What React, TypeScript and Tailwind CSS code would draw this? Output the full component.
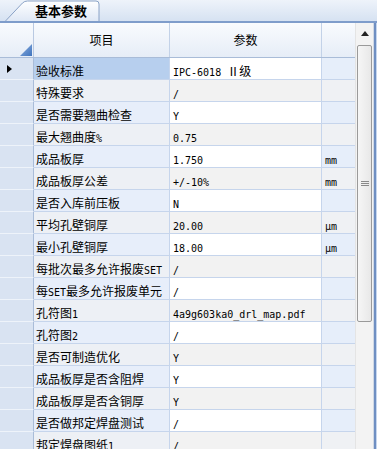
import React from "react";

const rows: [string, string, string][] = [
  ["验收标准", "IPC-6018 Ⅱ级", ""],
  ["特殊要求", "/", ""],
  ["是否需要翘曲检查", "Y", ""],
  ["最大翘曲度%", "0.75", ""],
  ["成品板厚", "1.750", "mm"],
  ["成品板厚公差", "+/-10%", "mm"],
  ["是否入库前压板", "N", ""],
  ["平均孔壁铜厚", "20.00", "μm"],
  ["最小孔壁铜厚", "18.00", "μm"],
  ["每批次最多允许报废SET", "/", ""],
  ["每SET最多允许报废单元", "/", ""],
  ["孔符图1", "4a9g603ka0_drl_map.pdf", ""],
  ["孔符图2", "/", ""],
  ["是否可制造优化", "Y", ""],
  ["成品板厚是否含阻焊", "Y", ""],
  ["成品板厚是否含铜厚", "Y", ""],
  ["是否做邦定焊盘测试", "/", ""],
  ["邦定焊盘图纸1", "/", ""],
];

const CJK = /([\u2150-\u218f\u3000-\u9fff\uff00-\uffef]+)/;

function Mixed({ text }: { text: string }) {
  const parts = text.split(CJK).filter((p) => p.length > 0);
  return (
    <span className="whitespace-pre leading-[22px] text-[#000]">
      {parts.map((p, i) =>
        CJK.test(p) ? (
          <span key={i} className="font-['Noto_Sans_CJK_SC',sans-serif] text-[12px]">
            {p}
          </span>
        ) : (
          <span key={i} className="font-['DejaVu_Sans_Mono',monospace] text-[10px]">
            {p}
          </span>
        )
      )}
    </span>
  );
}

export default function App() {
  return (
    <div className="w-[377px] h-[449px] overflow-hidden bg-white flex flex-col select-none">
      {/* tab strip */}
      <div className="h-[23px] shrink-0 flex items-end bg-gradient-to-b from-[#eef3fa] to-[#d6e2f2] border-b-2 border-[#7f9dcb]">
        <div className="relative ml-[5px] w-[95px] h-[21px] flex items-center">
          <svg className="absolute inset-0" width="95" height="21" viewBox="0 0 95 21">
            <defs>
              <linearGradient id="tabg" x1="0" y1="0" x2="0" y2="1">
                <stop offset="0" stopColor="#ffffff" />
                <stop offset="1" stopColor="#dfe8f5" />
              </linearGradient>
            </defs>
            <path d="M0.5,21 L17.5,3 Q19.5,1 22.5,1 L91,1 Q94,1 94,4 L94,21" fill="url(#tabg)" stroke="#8aa2c6" strokeWidth="1" />
          </svg>
          <span className="relative pl-[30px] text-[13px] font-bold leading-none text-black font-['Noto_Sans_CJK_SC',sans-serif]">
            基本参数
          </span>
        </div>
      </div>

      <div className="flex flex-1 min-h-0">
        {/* grid */}
        <div className="w-[355px] shrink-0 flex flex-col">
          {/* header */}
          <div className="flex h-[35px] shrink-0 bg-gradient-to-b from-[#f9fbfe] to-[#e6edf7] border-b border-[#a9bcd8]">
            <div className="relative w-[34px] border-r border-[#b9c9e2]">
              <svg className="absolute right-[1px] bottom-[1px]" width="12" height="12" viewBox="0 0 12 12">
                <defs>
                  <linearGradient id="cg" x1="0" y1="0" x2="1" y2="1">
                    <stop offset="0" stopColor="#8fb2e0" />
                    <stop offset="1" stopColor="#3f73bd" />
                  </linearGradient>
                </defs>
                <path d="M12,0 L12,12 L0,12 Z" fill="url(#cg)" />
              </svg>
            </div>
            <div className="w-[136px] border-r border-[#c3d2e8] flex items-center justify-center text-[12px] text-black font-['Noto_Sans_CJK_SC',sans-serif]">
              项目
            </div>
            <div className="w-[152px] border-r border-[#c3d2e8] flex items-center justify-center text-[12px] text-black font-['Noto_Sans_CJK_SC',sans-serif]">
              参数
            </div>
            <div className="flex-1" />
          </div>

          {/* rows */}
          {rows.map(([item, val, unit], i) => {
            const odd = i % 2 === 1;
            const itemBg = i === 0 ? "bg-[#b7cfee]" : odd ? "bg-[#edf0f5]" : "bg-[#e7eefa]";
            const valBg = odd ? "bg-[#f2f2f2]" : "bg-white";
            const unitBg = odd ? "bg-[#eff1f4]" : "bg-[#e6eefa]";
            return (
              <div key={i} className="flex h-[22px] shrink-0">
                <div className="w-[34px] h-full bg-[#d9e3f2] border-r border-b border-r-[#a9bcd8] border-b-[#eef3fa] flex items-center pl-[7px]">
                  {i === 0 && (
                    <svg width="5" height="8" viewBox="0 0 5 8">
                      <path d="M0,0 L5,4 L0,8 Z" fill="#000" />
                    </svg>
                  )}
                </div>
                <div className={`w-[136px] h-full ${itemBg} border-r border-b border-[#c6d5ec] pl-[2px] overflow-hidden`}>
                  <Mixed text={item} />
                </div>
                <div className={`w-[152px] h-full ${valBg} border-r border-b border-[#c6d5ec] pl-[3px] overflow-hidden`}>
                  <Mixed text={val} />
                </div>
                <div className={`flex-1 h-full ${unitBg} border-b border-[#c6d5ec] pl-[3px] overflow-hidden`}>
                  {unit && <Mixed text={unit} />}
                </div>
              </div>
            );
          })}
        </div>

        {/* scrollbar */}
        <div className="w-[18px] shrink-0 bg-[#f3f3f3] flex flex-col items-center border-l border-[#e4e4e4]">
          <div className="h-[20px] w-full flex items-center justify-center">
            <svg width="8" height="5" viewBox="0 0 8 5">
              <path d="M4,0 L8,5 L0,5 Z" fill="#222" />
            </svg>
          </div>
          <div className="w-[15px] h-[277px] mt-[2px] rounded-[2px] border border-[#9a9a9a] bg-gradient-to-r from-[#f6f6f6] to-[#e8e8e8] flex items-center justify-center">
            <div className="flex flex-col gap-[1px]">
              <div className="w-[8px] h-[1px] bg-[#8a8a8a]" />
              <div className="w-[8px] h-[1px] bg-[#8a8a8a]" />
              <div className="w-[8px] h-[1px] bg-[#8a8a8a]" />
            </div>
          </div>
        </div>

        {/* right border */}
        <div className="w-[4px] shrink-0 flex">
          <div className="w-[1px] bg-[#d0d8e4]" />
          <div className="w-[2px] bg-[#6f8fc2]" />
          <div className="w-[1px] bg-[#c6d6ee]" />
        </div>
      </div>
    </div>
  );
}
